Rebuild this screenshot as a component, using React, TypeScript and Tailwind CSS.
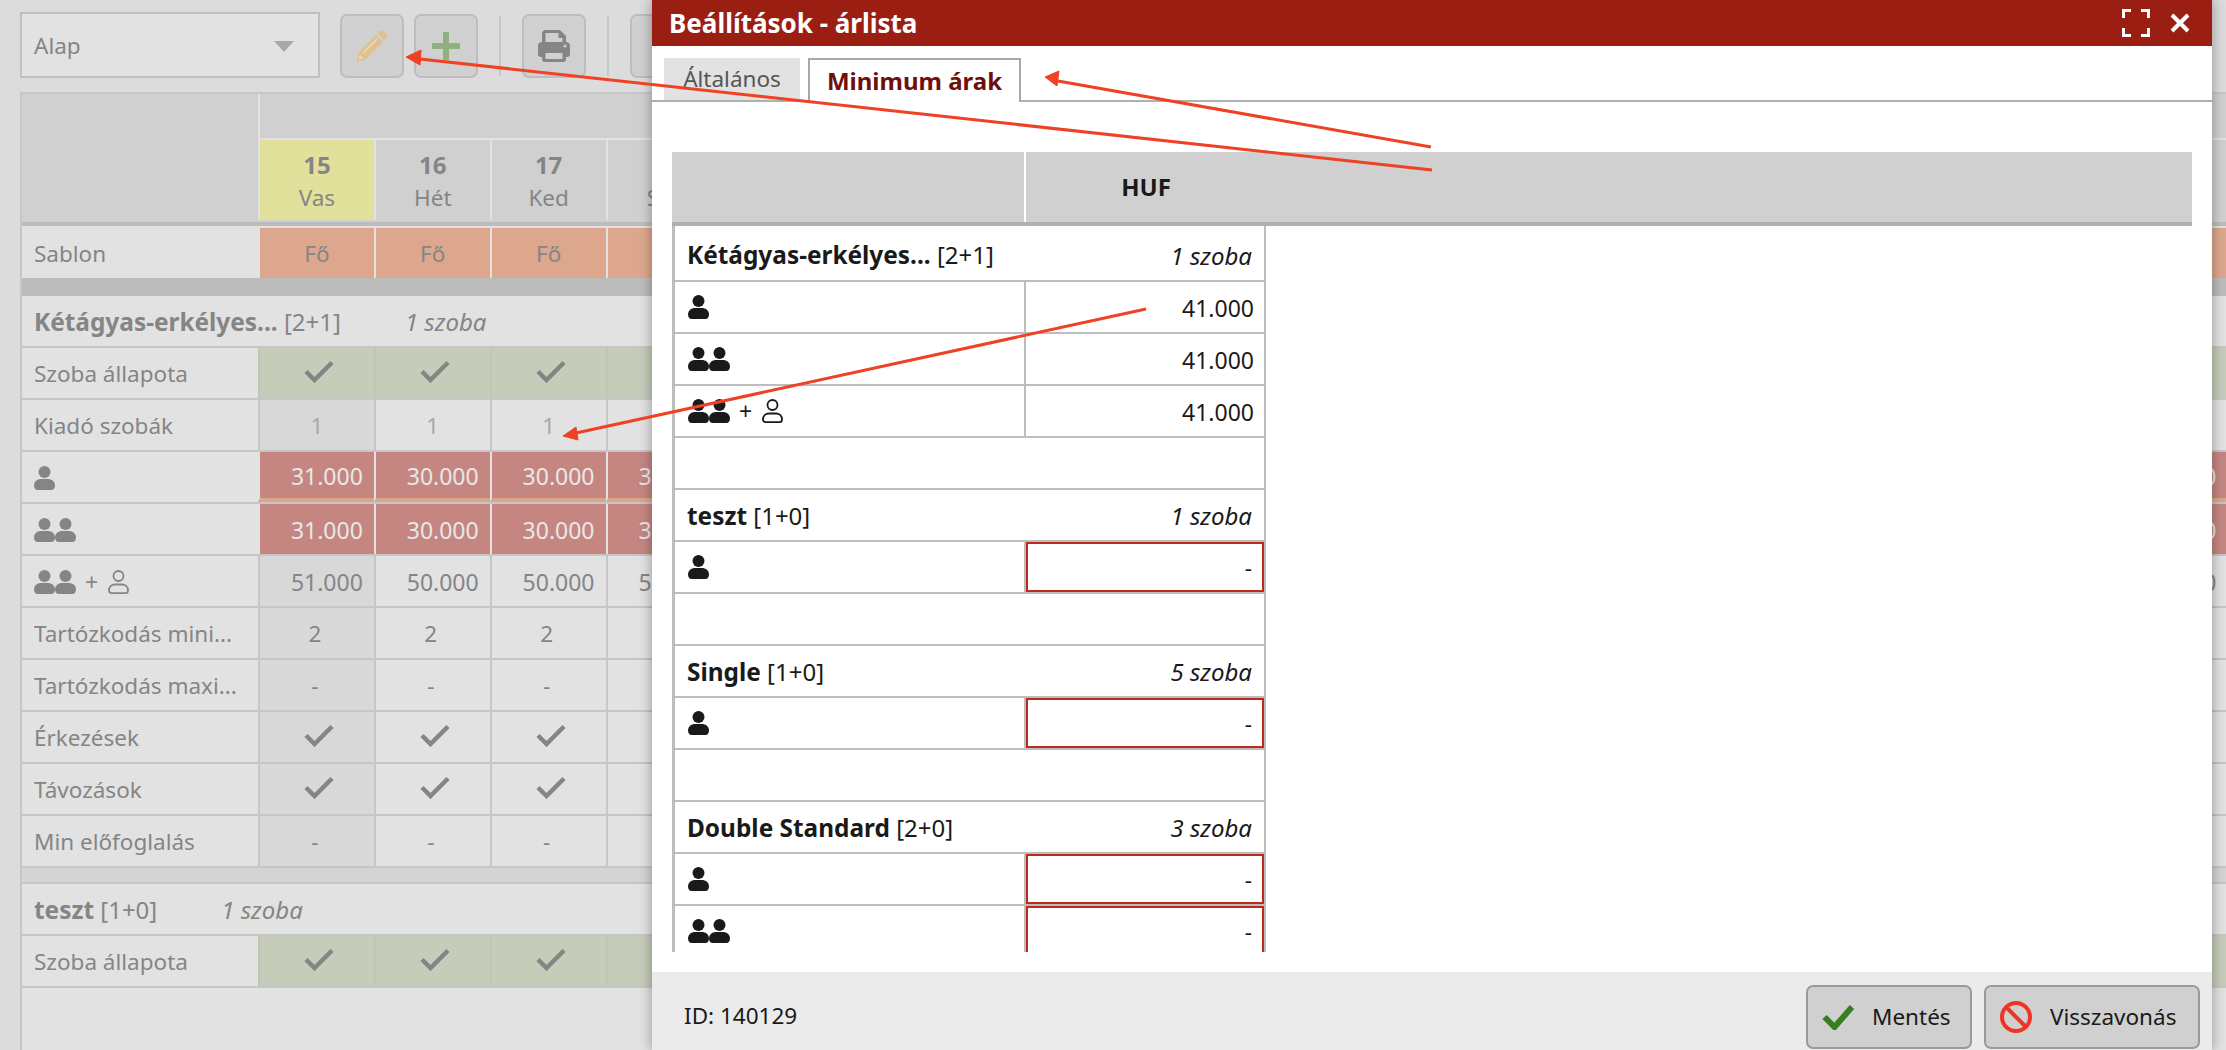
const days = [
  ["15", "Vas"],
  ["16", "Hét"],
  ["17", "Ked"],
  ["18", "Sze"],
  ["19", ""],
  ["20", ""],
  ["21", ""],
  ["22", ""],
  ["23", ""],
  ["24", ""],
  ["25", ""],
  ["26", ""],
  ["27", ""],
  ["28", ""],
  ["29", ""],
  ["30", ""],
  ["31", ""],
];

// columns 5-16 sit behind the dialog, only the first four and the last one show
const shows = (i: number) => i < 4 || i === days.length - 1;

function Person({ outline = false }: { outline?: boolean }) {
  if (outline) {
    return (
      <svg viewBox="0 0 21 24" className="h-[24px] w-[21px]" fill="none" stroke="currentColor" strokeWidth="1.8">
        <circle cx="10.5" cy="6" r="5" />
        <path d="M1 20.500c0-4 3-6 6-6h7c3 0 6 2 6 6 0 1.700-1 2.600-2.600 2.600H3.600C2 23.100 1 22.200 1 20.500z" />
      </svg>
    );
  }
  return (
    <svg viewBox="0 0 21 24" className="h-[24px] w-[21px]" fill="currentColor">
      <circle cx="10.5" cy="6" r="6" />
      <path d="M0 19.500C0 15 4 13 7 13h7c3 0 7 2 7 6.500 0 2.500-1.500 4.500-3.500 4.500h-14C1.500 24 0 22 0 19.500z" />
    </svg>
  );
}

function Persons({ kind }: { kind: number }) {
  return (
    <div className="flex items-center">
      <Person />
      {kind > 1 && <Person />}
      {kind > 2 && (
        <>
          <span className="ml-[9px] mr-[10px] text-[23px] leading-none">+</span>
          <Person outline />
        </>
      )}
    </div>
  );
}

function Check() {
  return (
    <svg viewBox="0 0 30 23" className="-mt-[5px] ml-[5px] h-[23px] w-[30px]" fill="none" stroke="#858585" strokeWidth="4.5">
      <path d="M2 11.500l8.500 8.500L28 2.500" />
    </svg>
  );
}

function Row({
  label,
  value,
  firstValue,
  bg = "",
  align = "center",
  text = "text-[#858585]",
  divider = "border-[#c6c6c6]",
  stripe = false,
  nudge = false,
}: {
  label: React.ReactNode;
  value: string;
  firstValue?: string;
  bg?: string;
  align?: "center" | "right";
  text?: string;
  divider?: string;
  stripe?: boolean;
  nudge?: boolean;
}) {
  return (
    <div className="flex h-[52px] shrink-0 border-b-2 border-[#c6c6c6]">
      <div className="flex w-[236px] shrink-0 items-center bg-[#e2e2e2] pl-[12px] pt-[2px] text-[#858585]">{label}</div>
      {days.map(([d], i) => (
        <div
          key={d}
          className={`flex w-[115.85px] shrink-0 items-center border-l-2 pt-[2px] ${divider} ${
            align === "right" ? "justify-end pr-[11px] text-[23px]" : "justify-center"
          } ${nudge ? "pr-[4px]" : ""} ${stripe ? "border-b-[4px] border-b-[#dca78c]" : ""} ${text} ${
            bg ? bg : i === 0 ? "bg-[#d8d8d8]" : ""
          }`}
        >
          {!shows(i) ? null : value === "check" ? <Check /> : i === 0 && firstValue ? firstValue : value}
        </div>
      ))}
    </div>
  );
}

function RoomRow({ name, beds, rooms }: { name: string; beds: string; rooms: string }) {
  return (
    <div className="flex h-[52px] shrink-0 items-center gap-[64px] border-b-2 border-[#c6c6c6] bg-[#e2e2e2] pl-[12px] pt-[2px] text-[#858585]">
      <div className="whitespace-nowrap text-[24px]">
        <b className="text-[24.4px]">{name}</b> {beds}
      </div>
      <i className="text-[24px]">{rooms}</i>
    </div>
  );
}

function ToolButton({ children }: { children?: React.ReactNode }) {
  return (
    <div className="mt-[2px] flex h-[64px] w-[64px] items-center justify-center rounded-[7px] border-2 border-[#bdbdbd] bg-[#d0d0d0]">
      {children}
    </div>
  );
}

function ModalRoom({
  name,
  beds,
  rooms,
  rows,
  first = false,
}: {
  name: string;
  beds: string;
  rooms: string;
  rows: [number, string][];
  first?: boolean;
}) {
  return (
    <>
      <div
        className={`flex shrink-0 items-center justify-between border-b-2 border-[#bdbdbd] px-[12px] ${
          first ? "h-[56px] pt-[5px]" : "h-[52px] pt-[2px]"
        }`}
      >
        <div className="whitespace-nowrap text-[24px]">
          <b className="text-[24.4px]">{name}</b> {beds}
        </div>
        <i className="text-[24px]">{rooms}</i>
      </div>
      {rows.map(([kind, price]) => (
        <div key={kind} className="flex h-[52px] shrink-0 border-b-2 border-[#bdbdbd]">
          <div className="flex w-[351px] shrink-0 items-center border-r-2 border-[#bdbdbd] pl-[13px]">
            <Persons kind={kind} />
          </div>
          {price === "-" ? (
            <div className="flex flex-1 items-center justify-end border-2 border-[#bf2a1e] pr-[10px] pt-[2px]">-</div>
          ) : (
            <div className="flex flex-1 items-center justify-end pr-[10px] pt-[2px] text-[23px]">{price}</div>
          )}
        </div>
      ))}
    </>
  );
}

export default function App() {
  return (
    <div className="relative h-[1050px] w-[2226px] overflow-hidden bg-[#dcdcdc] font-['Noto_Sans',sans-serif] text-[22.5px]">
      {/* page behind the dialog */}
      <div className="flex h-[92px] items-start gap-[10px] pl-[20px] pt-[12px] text-[#858585]">
        <div className="mr-[10px] flex h-[66px] w-[300px] items-center justify-between border-2 border-[#c0c0c0] bg-[#e2e2e2] pl-[12px] pr-[24px] pt-[2px]">
          Alap
          <div className="h-0 w-0 border-x-[10px] border-t-[11px] border-x-transparent border-t-[#a8a8a8]" />
        </div>
        <ToolButton>
          <svg viewBox="0 0 32 32" className="h-[32px] w-[32px]" fill="#dfc08f">
            <path d="M0 32l2.500-9.500L20 5l7 7L9.500 29.500z" />
            <path d="M21.500 3.500l2-2a3 3 0 0 1 4 0l3 3a3 3 0 0 1 0 4l-2 2z" />
            <path d="M7 23L21 9" stroke="#ecd9bb" strokeWidth="1.6" />
            <path d="M2.500 29.500l1.500-5 3.500 3.500z" fill="#ecd9bb" />
          </svg>
        </ToolButton>
        <ToolButton>
          <svg viewBox="0 0 28 28" className="h-[28px] w-[28px]" fill="#8fb07f">
            <path d="M11 2a3 3 0 0 1 6 0v9h9a3 3 0 0 1 0 6h-9v9a3 3 0 0 1-6 0v-9H2a3 3 0 0 1 0-6h9z" />
          </svg>
        </ToolButton>
        <div className="mx-[11px] mt-[4px] h-[60px] w-[2px] bg-[#c6c6c6]" />
        <ToolButton>
          <svg viewBox="0 0 32 32" className="h-[32px] w-[32px]" fill="#858585" fillRule="evenodd">
            <path d="M8 0h14l6 6v6a4 4 0 0 1 4 4v8a3 3 0 0 1-3 3h-1v2a3 3 0 0 1-3 3H7a3 3 0 0 1-3-3v-2H3a3 3 0 0 1-3-3v-8a4 4 0 0 1 4-4V4a4 4 0 0 1 4-4zM7.500 3v9h17V8h-4V3zM7.500 23v6h17v-6zM27 14.500a1.500 1.500 0 1 0 0 3 1.500 1.500 0 0 0 0-3z" />
          </svg>
        </ToolButton>
        <div className="mx-[11px] mt-[4px] h-[60px] w-[2px] bg-[#c6c6c6]" />
        <ToolButton />
      </div>

      <div className="ml-[20px] flex h-[958px] flex-col border-l-2 border-t-2 border-[#c6c6c6] bg-[#e2e2e2]">
        <div className="flex h-[132px] shrink-0 border-b-[4px] border-[#bcbcbc] bg-[#d0d0d0]">
          <div className="w-[236px] shrink-0" />
          <div className="flex flex-col">
            <div className="h-[46px] border-b-2 border-l-2 border-[#e2e2e2]" />
            <div className="flex flex-1">
              {days.map(([d, n], i) => (
                <div
                  key={d}
                  className={`mb-[2px] flex w-[115.85px] shrink-0 flex-col items-center justify-center border-l-2 border-[#e2e2e2] pt-[1px] text-[#858585] ${
                    i === 0 ? "bg-[#e2e19c]" : ""
                  }`}
                >
                  {i < 4 && (
                    <>
                      <b className="text-[24px] leading-[33px]">{d}</b>
                      <span className="leading-[33px]">{n}</span>
                    </>
                  )}
                </div>
              ))}
            </div>
          </div>
        </div>

        <div className="h-[2px] shrink-0" />
        <Row label="Sablon" value="Fő" bg="bg-[#dca78c]" divider="border-[#e2e2e2]" />
        <div className="-mt-[2px] h-[18px] shrink-0 bg-[#bcbcbc]" />
        <RoomRow name="Kétágyas-erkélyes..." beds="[2+1]" rooms="1 szoba" />
        <Row label="Szoba állapota" value="check" bg="bg-[#c6ccba]" divider="border-[#c0c6b4]" />
        <Row label="Kiadó szobák" value="1" text="text-[#a8a8a8]" />
        <Row
          label={<Persons kind={1} />}
          value="30.000"
          firstValue="31.000"
          bg="bg-[#c58682]"
          align="right"
          text="text-[#e8e8e8]"
          divider="border-[#e2e2e2]"
          stripe
        />
        <Row
          label={<Persons kind={2} />}
          value="30.000"
          firstValue="31.000"
          bg="bg-[#c58682]"
          align="right"
          text="text-[#e8e8e8]"
          divider="border-[#e2e2e2]"
        />
        <Row label={<Persons kind={3} />} value="50.000" firstValue="51.000" align="right" />
        <Row label="Tartózkodás mini..." value="2" nudge />
        <Row label="Tartózkodás maxi..." value="-" nudge />
        <Row label="Érkezések" value="check" />
        <Row label="Távozások" value="check" />
        <Row label="Min előfoglalás" value="-" nudge />
        <div className="h-[16px] shrink-0 border-b-2 border-[#c6c6c6] bg-[#d4d4d4]" />
        <RoomRow name="teszt" beds="[1+0]" rooms="1 szoba" />
        <Row label="Szoba állapota" value="check" bg="bg-[#c6ccba]" divider="border-[#c0c6b4]" />
      </div>

      {/* dialog */}
      <div className="absolute left-[652px] top-0 flex h-[1050px] w-[1560px] flex-col bg-white text-[#1a1a1a] shadow-[0_0_12px_rgba(0,0,0,0.35)]">
        <div className="flex h-[46px] shrink-0 items-center justify-between bg-[#9a1f12] pl-[17px] pr-[22px] text-[26px] font-bold text-white">
          Beállítások - árlista
          <div className="flex items-center gap-[20px]">
            <svg viewBox="0 0 28 28" className="h-[28px] w-[28px]" fill="none" stroke="white" strokeWidth="3">
              <path d="M1.500 9V1.500H9M19 1.500h7.500V9M26.500 19v7.500H19M9 26.500H1.500V19" />
            </svg>
            <svg viewBox="0 0 20 20" className="h-[20px] w-[20px]" fill="none" stroke="white" strokeWidth="4">
              <path d="M2 2l16 16M18 2L2 18" />
            </svg>
          </div>
        </div>

        <div className="flex h-[56px] shrink-0 items-end gap-[8px] border-b-2 border-[#b0b0b0] pl-[12px]">
          <div className="flex h-[42px] w-[136px] items-center justify-center bg-[#e2e2e2] text-[#555]">Általános</div>
          <div className="-mb-[2px] flex h-[44px] w-[213px] items-center justify-center border-2 border-b-0 border-[#a8a8a8] bg-white text-[24px] font-bold text-[#6e0f0a]">
            Minimum árak
          </div>
        </div>

        <div className="flex min-h-0 flex-1 flex-col pb-[20px] pl-[20px] pr-[20px] pt-[50px]">
          <div className="flex h-[74px] shrink-0 border-b-[4px] border-[#b0b0b0] bg-[#d0d0d0]">
            <div className="w-[354px] border-r-2 border-white" />
            <div className="flex w-[240px] items-center justify-center text-[24px] font-bold">HUF</div>
          </div>
          <div className="flex min-h-0 w-[594px] flex-1 flex-col overflow-hidden border-l-[3px] border-r-2 border-[#bdbdbd]">
            <ModalRoom
              first
              name="Kétágyas-erkélyes..."
              beds="[2+1]"
              rooms="1 szoba"
              rows={[
                [1, "41.000"],
                [2, "41.000"],
                [3, "41.000"],
              ]}
            />
            <div className="h-[52px] shrink-0 border-b-2 border-[#bdbdbd]" />
            <ModalRoom name="teszt" beds="[1+0]" rooms="1 szoba" rows={[[1, "-"]]} />
            <div className="h-[52px] shrink-0 border-b-2 border-[#bdbdbd]" />
            <ModalRoom name="Single" beds="[1+0]" rooms="5 szoba" rows={[[1, "-"]]} />
            <div className="h-[52px] shrink-0 border-b-2 border-[#bdbdbd]" />
            <ModalRoom
              name="Double Standard"
              beds="[2+0]"
              rooms="3 szoba"
              rows={[
                [1, "-"],
                [2, "-"],
              ]}
            />
          </div>
        </div>

        <div className="flex h-[78px] shrink-0 items-center justify-between bg-[#ebebeb] pl-[32px] pr-[12px]">
          <span className="pt-[10px]">ID: 140129</span>
          <div className="flex gap-[12px] pt-[12px]">
            <div className="flex h-[64px] w-[166px] items-center rounded-[7px] border-2 border-[#9a9a9a] bg-[#d0d0d0] pl-[14px]">
              <svg viewBox="0 0 32 26" className="mr-[18px] h-[26px] w-[32px]" fill="none" stroke="#38801f" strokeWidth="6">
                <path d="M2.500 13l10 10L30 3" />
              </svg>
              Mentés
            </div>
            <div className="flex h-[64px] w-[216px] items-center rounded-[7px] border-2 border-[#9a9a9a] bg-[#d0d0d0] pl-[14px]">
              <svg viewBox="0 0 32 32" className="mr-[18px] h-[32px] w-[32px]" fill="none" stroke="#ee3524" strokeWidth="4">
                <circle cx="16" cy="16" r="14" />
                <path d="M6 6l20 20" />
              </svg>
              Visszavonás
            </div>
          </div>
        </div>
      </div>

      {/* red annotation arrows */}
      <svg className="pointer-events-none absolute left-0 top-0 h-[1050px] w-[2226px]" viewBox="0 0 2226 1050" fill="#ef4123" stroke="#ef4123">
        <line x1="1432" y1="170" x2="420" y2="59" strokeWidth="3" />
        <path d="M406 57l15-7-1 15z" strokeWidth="1" />
        <line x1="1431" y1="147" x2="1058" y2="81" strokeWidth="3" />
        <path d="M1045 77l14-6-2 15z" strokeWidth="1" />
        <line x1="1146" y1="309" x2="576" y2="433" strokeWidth="3" />
        <path d="M563 436l13-9 2 13z" strokeWidth="1" />
      </svg>
    </div>
  );
}
